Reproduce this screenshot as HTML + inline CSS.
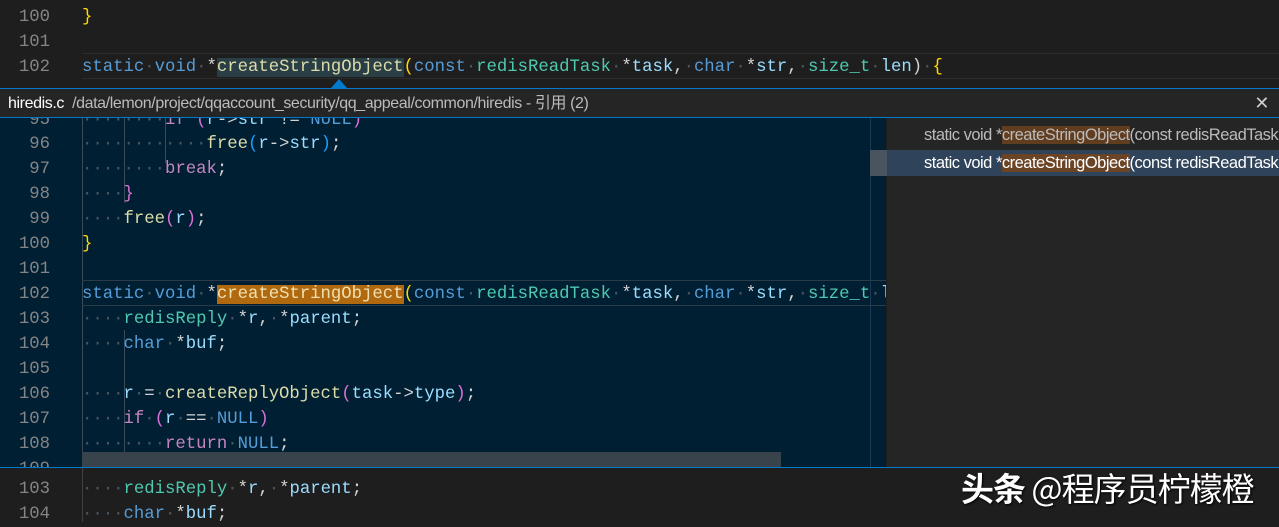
<!DOCTYPE html>
<html><head><meta charset="utf-8"><style>
*{margin:0;padding:0;box-sizing:border-box}
body{width:1279px;height:522px;overflow:hidden;background:#1e1e1e;position:relative;font-family:"Liberation Mono",monospace;font-size:17.3px}
.ln{position:absolute;left:0;width:50px;text-align:right;color:#858585;height:25px;line-height:25px}
.c{position:absolute;left:82px;height:25px;line-height:25px;white-space:pre;color:#d4d4d4}
.d{color:#4a5560}
.k{color:#569cd6}.t{color:#4ec9b0}.f{color:#dcdcaa}.v{color:#9cdcfe}.p{color:#c586c0}.y{color:#ffd700}.m{color:#da70d6}.b{color:#179fff}
.peek{position:absolute;left:0;top:118px;width:886px;height:349px;background:#001f33;overflow:hidden}
.guide{position:absolute;width:1px;background:#3a4a58}
</style></head><body>
<div class="ln" style="top:5px">100</div><div class="c" style="top:5px"><span class="y">}</span></div>
<div class="ln" style="top:30px">101</div>
<div style="position:absolute;left:82px;top:53px;width:1197px;height:26px;border-top:1px solid #2b2b2b;border-bottom:1px solid #2b2b2b"></div>
<div class="ln" style="top:55px">102</div><div class="c" style="top:55px"><span class="k">static</span><span class="d">·</span><span class="k">void</span><span class="d">·</span>*<span class="f" style="background:#2a3e45">createStringObject</span><span class="y">(</span><span class="k">const</span><span class="d">·</span><span class="t">redisReadTask</span><span class="d">·</span>*<span class="v">task</span>,<span class="d">·</span><span class="k">char</span><span class="d">·</span>*<span class="v">str</span>,<span class="d">·</span><span class="t">size_t</span><span class="d">·</span><span class="v">len</span>)<span class="d">·</span><span class="y">{</span></div>
<div style="position:absolute;left:331px;top:79px;width:0;height:0;border-left:8px solid transparent;border-right:8px solid transparent;border-bottom:9px solid #007acc"></div>
<div style="position:absolute;left:0;top:88px;width:1279px;height:30px;background:#252526;border-top:1px solid #007acc;border-bottom:1px solid #007acc;font-family:'Liberation Sans','Noto Sans CJK SC',sans-serif;font-size:16px;line-height:29px;padding-left:8px;color:#bbb;letter-spacing:-0.4px"><b style="color:#fff;font-weight:normal">hiredis.c</b> &nbsp;/data/lemon/project/qqaccount_security/qq_appeal/common/hiredis - 引用 (2)<span style="position:absolute;right:10px;top:0;color:#ccc;font-size:18px">✕</span></div>
<div class="peek">
<div class="guide" style="left:82px;top:0;height:349px"></div>
<div class="guide" style="left:124px;top:0;height:85px"></div>
<div class="guide" style="left:165px;top:0;height:45px"></div>
<div class="guide" style="left:124px;top:212px;height:137px"></div>
<div class="ln" style="top:-10px">95</div><div class="c" style="top:-10px"><span class="d">········</span><span class="p">if</span> <span class="m">(</span><span class="v">r</span>-><span class="v">str</span> != <span class="k">NULL</span><span class="m">)</span></div>
<div class="ln" style="top:14px">96</div><div class="c" style="top:14px"><span class="d">············</span><span class="f">free</span><span class="b">(</span><span class="v">r</span>-><span class="v">str</span><span class="b">)</span>;</div>
<div class="ln" style="top:39px">97</div><div class="c" style="top:39px"><span class="d">········</span><span class="p">break</span>;</div>
<div class="ln" style="top:64px">98</div><div class="c" style="top:64px"><span class="d">····</span><span class="m">}</span></div>
<div class="ln" style="top:89px">99</div><div class="c" style="top:89px"><span class="d">····</span><span class="f">free</span><span class="m">(</span><span class="v">r</span><span class="m">)</span>;</div>
<div class="ln" style="top:114px">100</div><div class="c" style="top:114px"><span class="y">}</span></div>
<div class="ln" style="top:139px">101</div>
<div style="position:absolute;left:82px;top:162px;width:804px;height:26px;border-top:1px solid #2b3b48;border-bottom:1px solid #2b3b48"></div>
<div class="ln" style="top:164px">102</div><div class="c" style="top:164px"><span class="k">static</span><span class="d">·</span><span class="k">void</span><span class="d">·</span>*<span class="f" style="background:#b0690f;color:#f0e0b0">createStringObject</span><span class="y">(</span><span class="k">const</span><span class="d">·</span><span class="t">redisReadTask</span><span class="d">·</span>*<span class="v">task</span>,<span class="d">·</span><span class="k">char</span><span class="d">·</span>*<span class="v">str</span>,<span class="d">·</span><span class="t">size_t</span><span class="d">·</span><span class="v">l</span></div>
<div class="ln" style="top:189px">103</div><div class="c" style="top:189px"><span class="d">····</span><span class="t">redisReply</span><span class="d">·</span>*<span class="v">r</span>,<span class="d">·</span>*<span class="v">parent</span>;</div>
<div class="ln" style="top:214px">104</div><div class="c" style="top:214px"><span class="d">····</span><span class="k">char</span><span class="d">·</span>*<span class="v">buf</span>;</div>
<div class="ln" style="top:239px">105</div>
<div class="ln" style="top:264px">106</div><div class="c" style="top:264px"><span class="d">····</span><span class="v">r</span><span class="d">·</span>=<span class="d">·</span><span class="f">createReplyObject</span><span class="m">(</span><span class="v">task</span>-><span class="v">type</span><span class="m">)</span>;</div>
<div class="ln" style="top:289px">107</div><div class="c" style="top:289px"><span class="d">····</span><span class="p">if</span><span class="d">·</span><span class="m">(</span><span class="v">r</span><span class="d">·</span>==<span class="d">·</span><span class="k">NULL</span><span class="m">)</span></div>
<div class="ln" style="top:314px">108</div><div class="c" style="top:314px"><span class="d">········</span><span class="p">return</span><span class="d">·</span><span class="k">NULL</span>;</div>
<div class="ln" style="top:339px">109</div>
<div style="position:absolute;left:82px;top:334px;width:699px;height:15px;background:#38434c"></div>
<div style="position:absolute;left:870px;top:0;width:1px;height:349px;background:#1a3a55"></div>
</div>
<div style="position:absolute;left:887px;top:118px;width:392px;height:349px;background:#252526;font-family:'Liberation Sans',sans-serif;font-size:16.5px;letter-spacing:-0.5px;white-space:nowrap;overflow:hidden">
<div style="position:absolute;left:37px;top:5px;line-height:24px;color:#bbb">static void *<span style="background:#613d20">createStringObject</span>(const redisReadTask</div>
<div style="position:absolute;left:0;top:32px;width:392px;height:26px;background:#2f435a"></div>
<div style="position:absolute;left:37px;top:33px;line-height:24px;color:#fff">static void *<span style="background:#6b4426">createStringObject</span>(const redisReadTask</div>
</div>
<div style="position:absolute;left:870px;top:150px;width:17px;height:26px;background:#4a5460"></div>
<div style="position:absolute;left:0;top:467px;width:1279px;height:1px;background:#007acc"></div>
<div class="guide" style="left:82px;top:468px;height:54px;background:#404040"></div>
<div class="ln" style="top:477px">103</div><div class="c" style="top:477px"><span class="d">····</span><span class="t">redisReply</span><span class="d">·</span>*<span class="v">r</span>,<span class="d">·</span>*<span class="v">parent</span>;</div>
<div class="ln" style="top:502px">104</div><div class="c" style="top:502px"><span class="d">····</span><span class="k">char</span><span class="d">·</span>*<span class="v">buf</span>;</div>
<div style="position:absolute;left:961px;top:465px;font-family:'Noto Sans CJK SC',sans-serif;font-size:33px;color:#fff;line-height:44px;text-shadow:1px 1px 2px #000;white-space:nowrap;letter-spacing:-1px"><b>头条</b> @程序员柠檬橙</div>
</body></html>
